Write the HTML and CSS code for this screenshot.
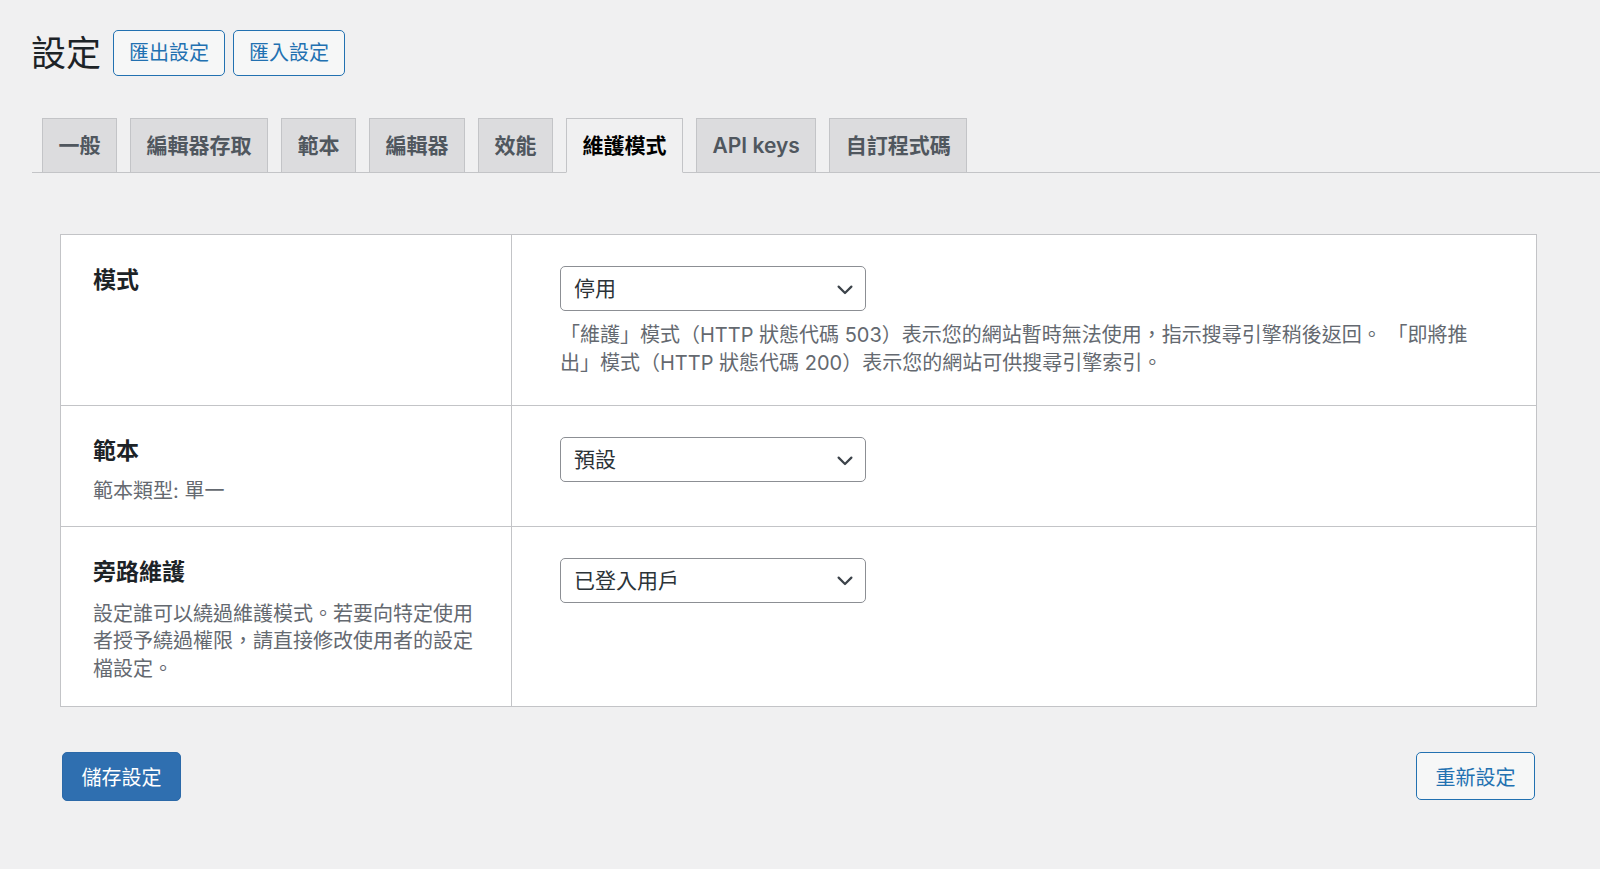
FILE: index.html
```html
<!DOCTYPE html>
<html lang="zh-Hant">
<head>
<meta charset="utf-8">
<title>設定</title>
<link rel="stylesheet" href="styles.css">
</head>
<body>
<div class="wrap">
  <header class="page-head">
    <h1 class="page-title">設定</h1>
    <button class="btn btn-outline btn-sm">匯出設定</button>
    <button class="btn btn-outline btn-sm">匯入設定</button>
  </header>

  <nav class="tabs">
    <a class="tab">一般</a>
    <a class="tab">編輯器存取</a>
    <a class="tab">範本</a>
    <a class="tab">編輯器</a>
    <a class="tab">效能</a>
    <a class="tab tab-active">維護模式</a>
    <a class="tab">API keys</a>
    <a class="tab">自訂程式碼</a>
  </nav>
</div>

<main class="content">
  <section class="settings">
    <div class="row">
      <div class="th">
        <div class="label">模式</div>
      </div>
      <div class="td">
        <div class="select">
          <span class="select-value">停用</span>
          <svg class="chev" width="16" height="10" viewBox="0 0 16 10"><polyline points="1.6,1.6 8,8 14.4,1.6" fill="none" stroke="#3c434a" stroke-width="2.2" stroke-linecap="round" stroke-linejoin="round"/></svg>
        </div>
        <p class="desc desc-field">「維護」模式（HTTP 狀態代碼 503）表示您的網站暫時無法使用，指示搜尋引擎稍後返回。 「即將推<br>出」模式（HTTP 狀態代碼 200）表示您的網站可供搜尋引擎索引。</p>
      </div>
    </div>
    <div class="row">
      <div class="th th-short">
        <div class="label">範本</div>
        <p class="desc">範本類型: 單一</p>
      </div>
      <div class="td">
        <div class="select">
          <span class="select-value">預設</span>
          <svg class="chev" width="16" height="10" viewBox="0 0 16 10"><polyline points="1.6,1.6 8,8 14.4,1.6" fill="none" stroke="#3c434a" stroke-width="2.2" stroke-linecap="round" stroke-linejoin="round"/></svg>
        </div>
      </div>
    </div>
    <div class="row">
      <div class="th th-long">
        <div class="label">旁路維護</div>
        <p class="desc">設定誰可以繞過維護模式。若要向特定使用者授予繞過權限，請直接修改使用者的設定檔設定。</p>
      </div>
      <div class="td">
        <div class="select">
          <span class="select-value">已登入用戶</span>
          <svg class="chev" width="16" height="10" viewBox="0 0 16 10"><polyline points="1.6,1.6 8,8 14.4,1.6" fill="none" stroke="#3c434a" stroke-width="2.2" stroke-linecap="round" stroke-linejoin="round"/></svg>
        </div>
      </div>
    </div>
  </section>

  <footer class="actions">
    <button class="btn btn-primary">儲存設定</button>
    <button class="btn btn-outline btn-lg">重新設定</button>
  </footer>
</main>
</body>
</html>
```

FILE: styles.css
```css
* { box-sizing: border-box; }

html, body {
  margin: 0;
  padding: 0;
  background: #f0f0f1;
}

body {
  font-family: "Inter", "Noto Sans CJK TC", sans-serif;
  color: #1d2327;
  width: 1600px;
  height: 869px;
  overflow: hidden;
}

.wrap {
  padding-left: 32px;
}

.page-head {
  display: flex;
  align-items: center;
  margin-top: 30px;
  height: 46px;
}

.page-title {
  margin: 0 12px 0 -1px;
  font-size: 35px;
  font-weight: 400;
  line-height: 46px;
  color: #1d2327;
}

.btn {
  font-family: inherit;
  font-size: 20px;
  border-radius: 5px;
  cursor: pointer;
  margin: 0;
}

.btn-outline {
  background: #f6f7f7;
  color: #2271b1;
  border: 1.5px solid #2271b1;
}

.btn-sm {
  height: 46px;
  padding: 0 15px;
  line-height: 42px;
  margin-right: 8px;
}

.btn-lg {
  height: 48px;
  width: 119px;
  padding: 0;
}

.btn-primary {
  background: #2f6fb0;
  color: #fff;
  border: 1px solid #2b69a8;
  height: 49px;
  width: 119px;
  padding: 0;
}

.tabs {
  display: flex;
  align-items: flex-end;
  margin-top: 42px;
  padding-left: 10px;
  border-bottom: 1px solid #c3c4c7;
  height: 55px;
}

.tab {
  display: block;
  margin-left: 13px;
  margin-bottom: -1px;
  padding: 8px 15.5px;
  height: 55px;
  line-height: 37px;
  font-size: 21px;
  font-weight: 600;
  color: #50575e;
  background: #dcdcde;
  border: 1px solid #c3c4c7;
  white-space: nowrap;
}

.tab:first-child { margin-left: 0; }

.tab-active {
  background: #f0f0f1;
  color: #000;
  border-bottom-color: #f0f0f1;
}

.content {
  margin: 61px 63px 0 60px;
}

.settings {
  background: #fff;
  border: 1px solid #c3c4c7;
}

.row {
  display: grid;
  grid-template-columns: 451px 1fr;
  border-top: 1px solid #c3c4c7;
}

.row:first-child { border-top: 0; }

.th {
  padding: 31px 28px 23px 32px;
  border-right: 1px solid #c3c4c7;
}

.th-short { padding-bottom: 20px; }

.th-long { padding-bottom: 23px; }
.th-long .desc { margin-top: 15px; }

.label {
  font-size: 23px;
  font-weight: 600;
  line-height: 28px;
  color: #1d2327;
}

.desc {
  margin: 13px 0 0;
  font-size: 20px;
  line-height: 27.5px;
  color: #646970;
}

.td {
  padding: 31px 48px 28px 48px;
}

.desc-field { margin-top: 11px; }

.select {
  display: flex;
  align-items: center;
  justify-content: space-between;
  width: 306px;
  height: 45px;
  padding: 0 12px 0 13px;
  border: 1px solid #8c8f94;
  border-radius: 5px;
  background: #fff;
  font-size: 21px;
  color: #2c3338;
}

.select-value { padding-bottom: 3px; }

.chev { display: block; margin-top: 2px; }

.actions {
  display: flex;
  justify-content: space-between;
  align-items: flex-start;
  margin-top: 45px;
  padding: 0 2px;
}
```
